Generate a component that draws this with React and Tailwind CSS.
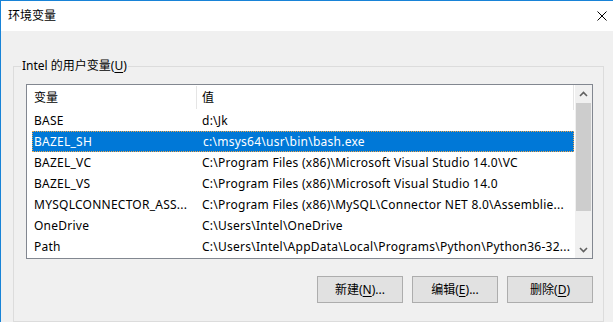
import React from "react";

const FONT = "font-['Noto_Sans','Noto_Sans_CJK_SC',sans-serif]";

const rows = [
  ["BASE", "d:\\Jk"],
  ["BAZEL_SH", "c:\\msys64\\usr\\bin\\bash.exe", true],
  ["BAZEL_VC", "C:\\Program Files (x86)\\Microsoft Visual Studio 14.0\\VC"],
  ["BAZEL_VS", "C:\\Program Files (x86)\\Microsoft Visual Studio 14.0"],
  ["MYSQLCONNECTOR_ASS...", "C:\\Program Files (x86)\\MySQL\\Connector NET 8.0\\Assemblie..."],
  ["OneDrive", "C:\\Users\\Intel\\OneDrive"],
  ["Path", "C:\\Users\\Intel\\AppData\\Local\\Programs\\Python\\Python36-32..."],
];

function Chevron({ up }) {
  return (
    <svg width="9" height="6" viewBox="0 0 9 6">
      <polyline
        points={up ? "1,5 4.5,1.5 8,5" : "1,1 4.5,4.5 8,1"}
        fill="none"
        stroke="#606060"
        strokeWidth="1.6"
      />
    </svg>
  );
}

function Btn({ label, acc, dots }) {
  return (
    <button className="w-[86px] h-[27px] border border-[#adadad] bg-[#e1e1e1] text-[12px] text-black flex items-center justify-center leading-none">
      {label}(<span className="underline underline-offset-2">{acc}</span>){dots ? "..." : ""}
    </button>
  );
}

export default function App() {
  return (
    <div className={`w-[613px] h-[322px] flex flex-col border-l border-t border-[#1883d7] bg-[#f0f0f0] overflow-hidden text-black ${FONT}`}>
      <div className="h-[30px] bg-white flex items-center justify-between pl-[7px] pr-[6px] shrink-0">
        <span className="text-[12px] leading-none">环境变量</span>
        <svg width="10" height="10" viewBox="0 0 10 10">
          <path d="M0.5 0.5 L9.5 9.5 M9.5 0.5 L0.5 9.5" stroke="#000" strokeWidth="1" fill="none" />
        </svg>
      </div>
      <div className="flex-1 pt-[35px] pl-[12px] pr-[9px]">
        <div className="relative h-full border border-[#dcdcdc] pl-[12px] pr-[10px] pt-[17px]">
          <div className="absolute left-[7px] top-[-9px] px-[1px] bg-[#f0f0f0] text-[12px] leading-[16px]">
            Intel 的用户变量(<span className="underline underline-offset-2">U</span>)
          </div>
          <div className="h-[175px] border border-[#828790] bg-white flex">
            <div className="flex-1 flex flex-col text-[12px] overflow-hidden">
              <div className="h-[25px] flex shrink-0">
                <div className="w-[170px] border-r border-[#e5e5e5] pl-[7px] my-[1px] flex items-center">变量</div>
                <div className="w-[377px] border-r border-[#e5e5e5] pl-[5px] flex items-center">值</div>
              </div>
              {rows.map(([n, v, sel]) => (
                <div key={n} className="pl-[5px] shrink-0 tracking-[0.25px]">
                  <div
                    className={`h-[21px] w-[542px] flex items-center whitespace-nowrap overflow-hidden ${
                      sel ? "bg-[#0078d7] text-white border border-dotted border-[#f0a64a]" : ""
                    }`}
                  >
                    <div className={`w-[165px] shrink-0 overflow-hidden ${sel ? "pl-[1px]" : "pl-[2px]"}`}>{n}</div>
                    <div className="pl-[5px] overflow-hidden">{v}</div>
                  </div>
                </div>
              ))}
            </div>
            <div className="w-[17px] bg-[#f0f0f0] flex flex-col shrink-0">
              <div className="h-[17px] flex items-center justify-center"><Chevron up /></div>
              <div className="flex-1 pt-[1px]">
                <div className="h-[108px] mx-[1px] bg-[#cdcdcd]" />
              </div>
              <div className="h-[17px] flex items-center justify-center"><Chevron /></div>
            </div>
          </div>
          <div className="mt-[17px] flex justify-end gap-[9px]">
            <Btn label="新建" acc="N" dots />
            <Btn label="编辑" acc="E" dots />
            <Btn label="删除" acc="D" />
          </div>
        </div>
      </div>
    </div>
  );
}
